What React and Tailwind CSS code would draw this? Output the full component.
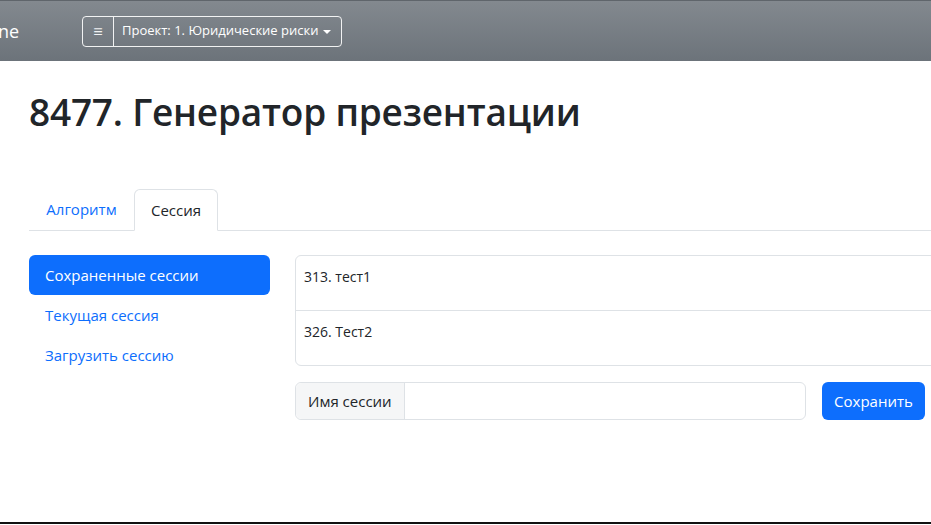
export default function App() {
  const font = { fontFamily: '"Open Sans", "Noto Sans", sans-serif' }
  return (
    <div className="relative h-[525px] w-[931px] overflow-hidden bg-white text-[#212529]" style={font}>
      {/* Navbar */}
      <div className="flex h-[61px] items-center border-t border-[#5f656b] bg-gradient-to-b from-[#83898f] to-[#6c737a]">
        <span className="-ml-[2px] w-[84px] text-[18px] text-white">ne</span>
        <div className="flex h-[31px] items-stretch rounded-[4px] border border-white/90 text-[13px] text-white">
          <span className="flex w-[31px] items-center justify-center border-r border-white/90 text-[16px] font-light text-white/90">≡</span>
          <span className="flex items-center gap-[5px] pl-[8px] pr-[10px]">
            Проект: 1. Юридические риски
            <span className="mt-[1px] h-0 w-0 border-x-[4px] border-t-[4px] border-x-transparent border-t-white" />
          </span>
        </div>
      </div>

      <div className="pl-[29px]">
        <h1 className="mt-[27px] text-[37px] font-semibold leading-[48px] tracking-[-0.2px]">8477. Генератор презентации</h1>

        {/* Tabs */}
        <div className="mt-[53px] flex h-[42px] items-end border-b border-[#dee2e6]">
          <div className="flex h-[41px] w-[105px] items-center justify-center text-[15px] text-[#0d6efd]">Алгоритм</div>
          <div className="-mb-px flex h-[42px] w-[84px] items-center justify-center rounded-t-[6px] border border-b-white border-[#dee2e6] bg-white text-[15px] text-[#212529]">
            Сессия
          </div>
        </div>

        <div className="mt-[24px] flex">
          {/* Pills */}
          <div className="flex w-[241px] shrink-0 flex-col text-[15px]">
            <div className="flex h-[40px] items-center rounded-[6px] bg-[#0d6efd] px-[16px] text-white">Сохраненные сессии</div>
            <div className="flex h-[40px] items-center px-[16px] text-[#0d6efd]">Текущая сессия</div>
            <div className="flex h-[40px] items-center px-[16px] text-[#0d6efd]">Загрузить сессию</div>
          </div>

          {/* Sessions */}
          <div className="ml-[25px] w-[660px] shrink-0">
            <div className="rounded-[6px] border border-[#dee2e6] text-[14px]">
              <div className="h-[55px] border-b border-[#dee2e6] px-[8px] pt-[10px]">313. тест1</div>
              <div className="h-[54px] px-[8px] pt-[10px]">326. Тест2</div>
            </div>
            <div className="mt-[16px] flex items-center">
              <div className="flex h-[38px] w-[511px] rounded-[6px] border border-[#dee2e6] text-[15px]">
                <span className="flex items-center rounded-l-[6px] border-r border-[#dee2e6] bg-[#f5f6f7] px-[12px]">Имя сессии</span>
                <span className="flex-1" />
              </div>
              <button className="ml-[16px] h-[38px] w-[103px] rounded-[6px] bg-[#0d6efd] text-[15px] text-white">Сохранить</button>
            </div>
          </div>
        </div>
      </div>

      <div className="absolute bottom-[1px] left-0 h-[2px] w-full bg-[#111]" />
    </div>
  )
}
